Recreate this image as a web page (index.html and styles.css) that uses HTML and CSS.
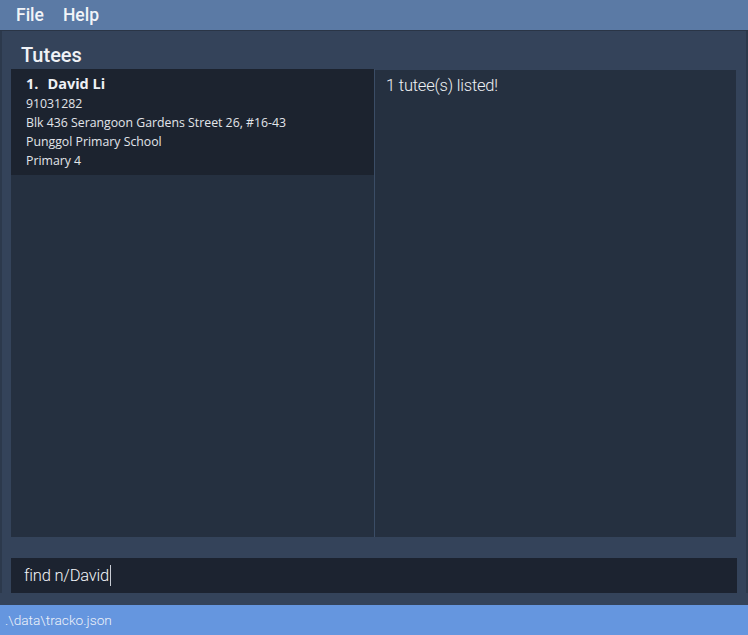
FILE: index.html
```html
<!DOCTYPE html>
<html>
<head>
<meta charset="utf-8">
<link rel="stylesheet" href="styles.css">
</head>
<body>
<div class="app">
  <div class="menubar">
    <span class="menu-item">File</span>
    <span class="menu-item">Help</span>
  </div>
  <div class="main">
    <div class="title">Tutees</div>
    <div class="panes">
      <div class="list">
        <div class="card">
          <div class="name"><span class="idx">1.</span>David Li</div>
          <div class="detail">91031282</div>
          <div class="detail">Blk 436 Serangoon Gardens Street 26, #16-43</div>
          <div class="detail">Punggol Primary School</div>
          <div class="detail">Primary 4</div>
        </div>
      </div>
      <div class="result">1 tutee(s) listed!</div>
    </div>
    <div class="command"><span class="cmd-text">find n/David</span><span class="caret"></span></div>
  </div>
  <div class="status">.\data\tracko.json</div>
</div>
</body>
</html>
```
FILE: styles.css
```css
html, body {
  margin: 0;
  padding: 0;
  background: #34435a;
}
.app {
  width: 748px;
  height: 635px;
  display: flex;
  flex-direction: column;
  font-family: "Open Sans", sans-serif;
}
.menubar {
  height: 30px;
  background: #5b7aa5;
  border-bottom: 1px solid #2a3546;
  display: flex;
  align-items: center;
  padding-left: 16px;
  font-family: Roboto, sans-serif;
  font-weight: 500;
  font-size: 17.5px;
  color: #f2f4f8;
}
.menu-item {
  margin-right: 19px;
}
.main {
  flex: 1;
  display: flex;
  flex-direction: column;
  padding: 0 9px 0 9px;
  border-left: 2px solid #2c394c;
  border-right: 2px solid #2c394c;
  background: #34435a;
}
.title {
  height: 38px;
  box-sizing: border-box;
  padding: 12px 0 0 10px;
  font-family: Roboto, sans-serif;
  font-weight: 500;
  font-size: 20px;
  line-height: 24px;
  color: #f0f2f6;
}
.panes {
  height: 468px;
  display: flex;
  margin-right: 1px;
}
.list {
  width: 363px;
  background: #253040;
  border-right: 1px solid #3b4d66;
}
.card {
  background: #1c232f;
  height: 106px;
  box-sizing: border-box;
  padding: 5px 15px;
  color: #e6e8ec;
}
.name {
  font-family: "Open Sans", sans-serif;
  font-weight: 700;
  font-size: 14.5px;
  line-height: 20px;
  color: #eef0f4;
}
.idx {
  margin-right: 9px;
}
.detail {
  font-size: 12.3px;
  line-height: 19px;
  color: #e2e5ea;
}
.result {
  flex: 1;
  background: #253040;
  margin-top: 1px;
  padding: 5px 11px;
  font-family: Roboto, sans-serif;
  font-weight: 300;
  font-size: 16.5px;
  line-height: 22px;
  color: #eef0f4;
  letter-spacing: -0.2px;
}
.command {
  margin-top: 21px;
  height: 35px;
  background: #1c2330;
  display: flex;
  align-items: center;
  padding-left: 13px;
  font-family: Roboto, sans-serif;
  font-weight: 300;
  font-size: 16.5px;
  letter-spacing: -0.2px;
  color: #f2f4f8;
}
.caret {
  display: inline-block;
  width: 1px;
  height: 21px;
  margin-left: 1px;
  background: #c8ccd4;
}
.status {
  height: 30px;
  margin-top: 12px;
  background: #6596df;
  display: flex;
  align-items: center;
  padding-left: 5px;
  font-family: Roboto, sans-serif;
  font-weight: 300;
  font-size: 13.7px;
  color: #eef2fa;
}
```
